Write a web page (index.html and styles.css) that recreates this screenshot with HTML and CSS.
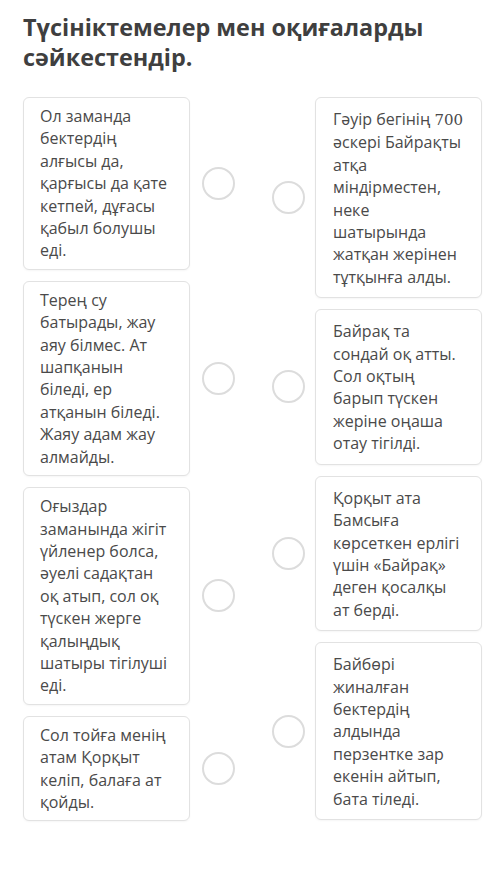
FILE: index.html
```html
<!DOCTYPE html>
<html lang="kk">
<head>
    <meta charset="UTF-8">
    <meta name="viewport" content="width=device-width, initial-scale=1.0">
    <title>Сәйкестендіру</title>
    <link rel="stylesheet" href="styles.css">
</head>
<body>
    <div class="page">
        <h1 class="title">Түсініктемелер мен оқиғаларды сәйкестендір.</h1>

        <div class="board">
            <div class="column">
                <div class="item">
                    <div class="card">Ол заманда бектердің алғысы да, қарғысы да қате кетпей, дұғасы қабыл болушы еді.</div>
                    <span class="dot"></span>
                </div>
                <div class="item">
                    <div class="card">Терең су батырады, жау аяу білмес. Ат шапқанын біледі, ер атқанын біледі. Жаяу адам жау алмайды.</div>
                    <span class="dot"></span>
                </div>
                <div class="item">
                    <div class="card">Оғыздар заманында жігіт үйленер болса, әуелі садақтан оқ атып, сол оқ түскен жерге қалыңдық шатыры тігілуші еді.</div>
                    <span class="dot"></span>
                </div>
                <div class="item">
                    <div class="card">Сол тойға менің атам Қорқыт келіп, балаға ат қойды.</div>
                    <span class="dot"></span>
                </div>
            </div>

            <div class="column">
                <div class="item">
                    <span class="dot"></span>
                    <div class="card card-right">Гәуір бегінің <span class="num">700</span> әскері Байрақты атқа міндірместен, неке шатырында жатқан жерінен тұтқынға алды.</div>
                </div>
                <div class="item">
                    <span class="dot"></span>
                    <div class="card card-right">Байрақ та сондай оқ атты. Сол оқтың барып түскен жеріне оңаша отау тігілді.</div>
                </div>
                <div class="item">
                    <span class="dot"></span>
                    <div class="card card-right">Қорқыт ата Бамсыға көрсеткен ерлігі үшін «Байрақ» деген қосалқы ат берді.</div>
                </div>
                <div class="item">
                    <span class="dot"></span>
                    <div class="card card-right">Байбөрі жиналған бектердің алдында перзентке зар екенін айтып, бата тіледі.</div>
                </div>
            </div>
        </div>
    </div>
</body>
</html>
```

FILE: styles.css
```css
body {
    margin: 0;
    background-color: #ffffff;
    font-family: 'Open Sans', 'Noto Sans', sans-serif;
    color: #4a4a4a;
}
.page {
    padding: 12px 18px 40px 23px;
}
.title {
    margin: 0 0 25px 0;
    font-size: 23.4px;
    line-height: 30px;
    font-weight: 700;
    color: #3f3f3f;
    max-width: 430px;
}
.board {
    display: grid;
    grid-template-columns: 212px 210px;
    column-gap: 37px;
    align-items: start;
}
.column {
    display: flex;
    flex-direction: column;
    gap: 11px;
}
.item {
    display: flex;
    align-items: center;
    gap: 12px;
}
.column + .column .item {
    gap: 10px;
}
.card {
    box-sizing: border-box;
    width: 167px;
    flex-shrink: 0;
    padding: 7px 16px;
    font-size: 16px;
    line-height: 22.4px;
    background-color: #ffffff;
    border: 1px solid #e2e2e2;
    border-radius: 6px;
    box-shadow: 0 1px 2px rgba(0, 0, 0, 0.04);
}
.card-right {
    padding: 10px 16px 9px 17px;
}
.num {
    font-family: 'DejaVu Serif', serif;
    font-size: 15px;
}
.dot {
    box-sizing: border-box;
    width: 33px;
    height: 33px;
    flex-shrink: 0;
    border: 2.5px solid #dcdcdc;
    border-radius: 50%;
    background-color: #ffffff;
}
```
